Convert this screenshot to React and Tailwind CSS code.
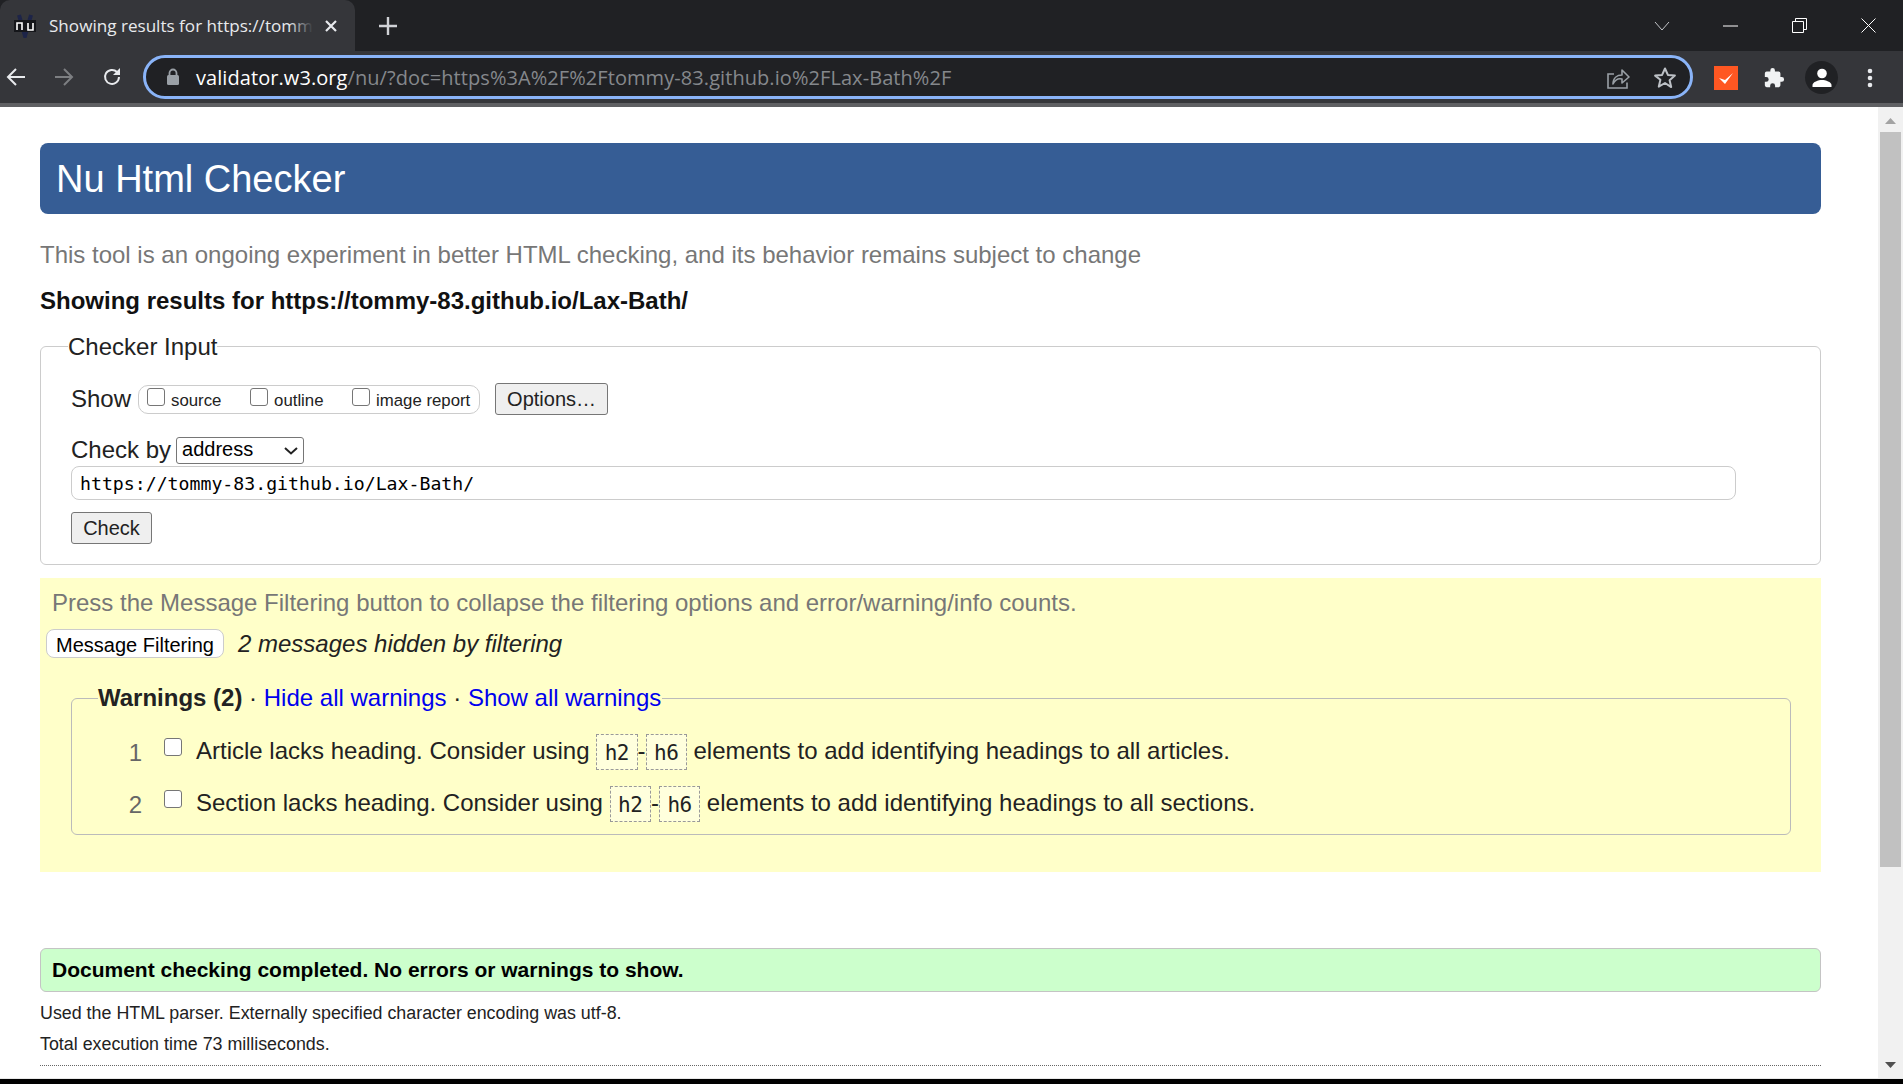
const sans = "font-['Liberation_Sans',Arial,sans-serif]";

function Favicon() {
  return (
    <svg width="24" height="24" viewBox="0 0 24 24" className="shrink-0">
      <path d="M6 1 L12 22 L18 1" fill="none" stroke="#1d2448" strokeWidth="4" />
      <rect x="1" y="6" width="22" height="12" fill="#15161a" />
      <path d="M4 16V9h5v7M15 9v7h5V9" fill="none" stroke="#fff" strokeWidth="1.6" />
    </svg>
  );
}

function TabStrip() {
  return (
    <div className="h-[51px] shrink-0 bg-[#202124] flex items-stretch">
      <div className="w-[355px] bg-[#35363a] rounded-t-[10px] flex items-center pl-[13px] relative">
        <Favicon />
        <div className="ml-[12px] w-[264px] overflow-hidden whitespace-nowrap text-[17.100px] text-[#e8eaed] font-['Open_Sans',sans-serif] relative">
          Showing results for https://tommy-83.github.io/Lax-Bath/
          <div className="absolute right-0 top-0 bottom-0 w-[24px] bg-gradient-to-r from-transparent to-[#35363a]" />
        </div>
        <svg width="14" height="14" viewBox="0 0 14 14" className="ml-[11px]">
          <path d="M2 2l10 10M12 2L2 12" stroke="#e8eaed" strokeWidth="2.2" />
        </svg>
      </div>
      <div className="ml-[24px] flex items-center">
        <svg width="18" height="18" viewBox="0 0 18 18">
          <path d="M9 0v18M0 9h18" stroke="#d0d2d6" strokeWidth="2.4" />
        </svg>
      </div>
      <div className="flex-1" />
      <div className="flex items-center text-white pr-[27px]">
        <svg width="16" height="10" viewBox="0 0 16 10" className="mr-[53px] mt-[1px]">
          <path d="M1 1l7 8 7-8" fill="none" stroke="#c4c6ca" strokeWidth="1" />
        </svg>
        <svg width="15" height="2" viewBox="0 0 15 2" className="mr-[54px]">
          <path d="M0 1h15" stroke="#fff" strokeWidth="1" />
        </svg>
        <svg width="15" height="15" viewBox="0 0 15 15" className="mr-[54px]">
          <path d="M.5 3.5h11v11H.5zM3.5 3.5V.5h11v11h-3" fill="none" stroke="#fff" strokeWidth="1" />
        </svg>
        <svg width="15" height="15" viewBox="0 0 15 15">
          <path d="M.5.5l14 14M14.5.5l-14 14" fill="none" stroke="#fff" strokeWidth="1" />
        </svg>
      </div>
    </div>
  );
}

function Toolbar() {
  return (
    <div className="h-[52px] shrink-0 bg-[#35363a] flex items-center relative">
      <div className="w-[143px] shrink-0 flex items-center pl-[6px] gap-[28px]">
        <svg width="20" height="20" viewBox="0 0 20 20">
          <path d="M19 10H2M10 2l-8 8 8 8" fill="none" stroke="#e8eaed" strokeWidth="2" />
        </svg>
        <svg width="20" height="20" viewBox="0 0 20 20">
          <path d="M1 10h17M10 2l8 8-8 8" fill="none" stroke="#7d7f82" strokeWidth="2" />
        </svg>
        <svg width="20" height="20" viewBox="0 0 20 20">
          <path d="M17 10a7 7 0 1 1-2-5" fill="none" stroke="#e8eaed" strokeWidth="2" />
          <path d="M18 1v7h-7z" fill="#e8eaed" />
        </svg>
      </div>
      <div className="w-[1550px] h-[44px] shrink-0 rounded-full border-[3px] border-[#8ab4f8] bg-[#202124] flex items-center pl-[20px] pr-[13px]">
        <svg width="14" height="18" viewBox="0 0 14 18" className="shrink-0">
          <path d="M3.5 8V5a3.5 3.5 0 0 1 7 0v3" fill="none" stroke="#9aa0a6" strokeWidth="1.8" />
          <rect x="1" y="7" width="12" height="10" rx="1.5" fill="#9aa0a6" />
        </svg>
        <div className="ml-[16px] mt-[1px] text-[20px] tracking-[0.07px] text-[#85888c] whitespace-nowrap font-['Open_Sans',sans-serif]">
          <span className="text-white">validator.w3.org</span>/nu/?doc=https%3A%2F%2Ftommy-83.github.io%2FLax-Bath%2F
        </div>
        <div className="flex-1" />
        <svg width="24" height="24" viewBox="0 0 24 24" className="mr-[23px] mt-[1px]">
          <path d="M21 16.5v5.5H2V8h6" fill="none" stroke="#9aa0a6" strokeWidth="1.6" />
          <path d="M7 18c0-6 4-9 9-9V4l7 7-7 6v-4c-4-1-7 1-9 5z" fill="none" stroke="#9aa0a6" strokeWidth="1.6" strokeLinejoin="round" />
        </svg>
        <svg width="24" height="24" viewBox="0 0 24 24" className="mt-[1px]">
          <path d="M12 2.5l2.9 6.4 7 .7-5.3 4.6 1.6 6.9L12 17l-6.2 3.6 1.6-6.9L2.100 9.600l7-.7z" fill="none" stroke="#bdc1c6" strokeWidth="2" strokeLinejoin="round" />
        </svg>
      </div>
      <div className="ml-[21px] w-[24px] h-[24px] mt-[1px] bg-[#ff5722] flex items-center justify-center">
        <svg width="16" height="14" viewBox="0 0 16 14">
          <path d="M1 7l6 6 8-11-8 7z" fill="#fff" />
        </svg>
      </div>
      <svg width="22" height="22" viewBox="0 0 24 24" className="ml-[25px] mt-[1px]">
        <path d="M20.500 11H19V7a2 2 0 0 0-2-2h-4V3.500a2.500 2.500 0 0 0-5 0V5H4a2 2 0 0 0-2 2v3.800h1.500a2.700 2.700 0 0 1 0 5.400H2V20a2 2 0 0 0 2 2h3.800v-1.500a2.700 2.700 0 0 1 5.400 0V22H17a2 2 0 0 0 2-2v-4h1.500a2.500 2.500 0 0 0 0-5z" fill="#f1f3f4" />
      </svg>
      <div className="ml-[20px] mt-[1px] w-[33px] h-[33px] rounded-full bg-[#202124] flex items-center justify-center">
        <svg width="20" height="20" viewBox="0 0 20 20">
          <circle cx="10" cy="5.500" r="4.800" fill="#fff" />
          <path d="M.5 19v-2c0-3 6-5 9.500-5s9.500 2 9.500 5v2z" fill="#fff" />
        </svg>
      </div>
      <svg width="6" height="20" viewBox="0 0 6 20" className="ml-[29px] mt-[1px]">
        <circle cx="3" cy="3" r="2.300" fill="#e8eaed" />
        <circle cx="3" cy="10" r="2.300" fill="#e8eaed" />
        <circle cx="3" cy="17" r="2.300" fill="#e8eaed" />
      </svg>
    </div>
  );
}

function Check() {
  return <input type="checkbox" className="appearance-none w-[18px] h-[18px] rounded-[3px] border border-[#767676] bg-white shrink-0" />;
}

function Code({ children }) {
  return (
    <code className="inline-block border border-dashed border-[#999] bg-[#ffffdd] px-[7.500px] h-[36px] leading-[36px] mb-[3px] align-middle font-['DejaVu_Sans_Mono',monospace] text-[21px] tracking-[-0.5px] text-[#222]">
      {children}
    </code>
  );
}

function Message({ n, text, tail, h }) {
  return (
    <li className={`flex items-center ${h}`}>
      <span className="w-[92px] shrink-0 text-right pr-[22px] text-[#666] text-[24px]">{n}</span>
      <span className="w-[32px] shrink-0 flex -mt-[12px]"><Check /></span>
      <span className="whitespace-nowrap text-[24px] text-[#222]">
        {text} <Code>h2</Code>-<Code>h6</Code> {tail}
      </span>
    </li>
  );
}

function Content() {
  return (
    <main className={`flex-1 min-w-0 bg-white overflow-hidden pl-[40px] pr-[57px] pt-[36px] ${sans} text-[#111]`}>
      <h1 className="h-[71px] rounded-[8px] bg-[#365d95] text-white text-[38px] leading-[73px] pl-[16px]">Nu Html Checker</h1>
      <p className="mt-[26px] text-[24px] leading-[30px] text-[#777]">This tool is an ongoing experiment in better HTML checking, and its behavior remains subject to change</p>
      <h2 className="mt-[16px] text-[24px] leading-[30px] font-bold text-[#111]">Showing results for https://tommy-83.github.io/Lax-Bath/</h2>

      <fieldset className="mt-[14px] h-[235px] border border-[#ccc] rounded-[6px] px-[30px]">
        <legend className="text-[24px] leading-[30px] pt-[2px] ml-[-3px] text-[#222]">Checker Input</legend>
        <div className="flex items-center mt-[21px] h-[32px]">
          <span className="text-[24px] text-[#222] mr-[7px]">Show</span>
          <div className="w-[342px] h-[29px] border border-[#ccc] rounded-[10px] flex items-center pl-[8px] text-[#222] text-[16.800px]">
            <label className="flex items-center w-[103px]"><span className="-mt-[5px] flex"><Check /></span><span className="ml-[6px] pt-[4px]">source</span></label>
            <label className="flex items-center w-[102px]"><span className="-mt-[5px] flex"><Check /></span><span className="ml-[6px] pt-[4px]">outline</span></label>
            <label className="flex items-center"><span className="-mt-[5px] flex"><Check /></span><span className="ml-[6px] pt-[4px]">image report</span></label>
          </div>
          <button className="ml-[15px] w-[113px] h-[32px] border border-[#767676] rounded-[3px] bg-[#efefef] text-[20px] text-[#222]">Options…</button>
        </div>
        <div className="flex items-center mt-[21px] h-[28px]">
          <span className="text-[24px] text-[#222] mr-[5px]">Check by</span>
          <div className="relative w-[128px] h-[27px]">
            <select className="appearance-none w-full h-full border border-[#767676] rounded-[3px] bg-white text-[20px] leading-[22px] text-black pl-[5px] pb-[3px]">
              <option>address</option>
            </select>
            <svg width="14" height="8" viewBox="0 0 14 8" className="absolute right-[6px] top-[10px] pointer-events-none">
              <path d="M1 1l6 5.500 6-5.500" fill="none" stroke="#222" strokeWidth="2" />
            </svg>
          </div>
        </div>
        <input
          readOnly
          value="https://tommy-83.github.io/Lax-Bath/"
          className="block mt-[2px] w-[1665px] h-[34px] border border-[#ccc] rounded-[8px] px-[8px] bg-white font-['DejaVu_Sans_Mono',monospace] text-[18.200px] text-black"
        />
        <button className="block mt-[12px] w-[81px] h-[32px] border border-[#767676] rounded-[3px] bg-[#efefef] text-[20px] text-[#222]">Check</button>
      </fieldset>

      <section className="mt-[13px] h-[294px] bg-[#ffffc9] pt-[9px]">
        <p className="pl-[12px] text-[24px] leading-[32px] text-[#777]">Press the Message Filtering button to collapse the filtering options and error/warning/info counts.</p>
        <div className="flex items-center pl-[6px] mt-[10px] h-[29px]">
          <button className="w-[178px] h-[29px] border border-[#ccc] rounded-[8px] bg-white text-[20px] text-black">Message Filtering</button>
          <i className="ml-[14px] text-[24px] text-[#222]">2 messages hidden by filtering</i>
        </div>
        <fieldset className="mt-[24px] ml-[31px] mr-[30px] h-[153px] border border-[#bbb] rounded-[6px] pl-[26px]">
          <legend className="text-[24px] leading-[32px] text-[#222] whitespace-nowrap pr-[1px]">
            <b>Warnings (2)</b> · <a className="text-[#0000ee]">Hide all warnings</a> · <a className="text-[#0000ee]">Show all warnings</a>
          </legend>
          <ol className="-ml-[26px] mt-[13px]">
            <Message n="1" h="h-[52px]" text="Article lacks heading. Consider using" tail="elements to add identifying headings to all articles." />
            <Message n="2" h="h-[52px]" text="Section lacks heading. Consider using" tail="elements to add identifying headings to all sections." />
          </ol>
        </fieldset>
      </section>

      <div className="mt-[76px] h-[44px] border border-[#c4c4c4] rounded-[6px] bg-[#ccffcc] pl-[11px] font-bold text-[21px] leading-[42px] text-black">
        Document checking completed. No errors or warnings to show.
      </div>
      <p className="mt-[8px] text-[17.850px] leading-[26px] text-[#222]">Used the HTML parser. Externally specified character encoding was utf-8.</p>
      <p className="mt-[5px] text-[17.850px] leading-[26px] text-[#222]">Total execution time 73 milliseconds.</p>
      <div className="mt-[8px] border-t border-dotted border-[#666]" />
    </main>
  );
}

function Scrollbar() {
  return (
    <div className="w-[25px] shrink-0 bg-[#f1f1f1] flex flex-col items-center">
      <svg width="15" height="25" viewBox="0 0 15 25" className="shrink-0"><path d="M2 17l5.500-6 5.500 6z" fill="#a3a3a3" /></svg>
      <div className="w-[21px] h-[735px] bg-[#c1c1c1]" />
      <div className="flex-1" />
      <svg width="15" height="25" viewBox="0 0 15 25" className="shrink-0"><path d="M2 9l5.500 6 5.500-6z" fill="#505050" /></svg>
    </div>
  );
}

export default function App() {
  return (
    <div className="w-[1903px] h-[1084px] overflow-hidden flex flex-col bg-black">
      <TabStrip />
      <Toolbar />
      <div className="h-[4px] shrink-0 bg-[#5f6063]" />
      <div className="h-[971px] shrink-0 flex overflow-hidden">
        <Content />
        <Scrollbar />
      </div>
      <div className="h-[1px] shrink-0 bg-[#e8e8e8]" />
      <div className="flex-1 bg-black" />
    </div>
  );
}
